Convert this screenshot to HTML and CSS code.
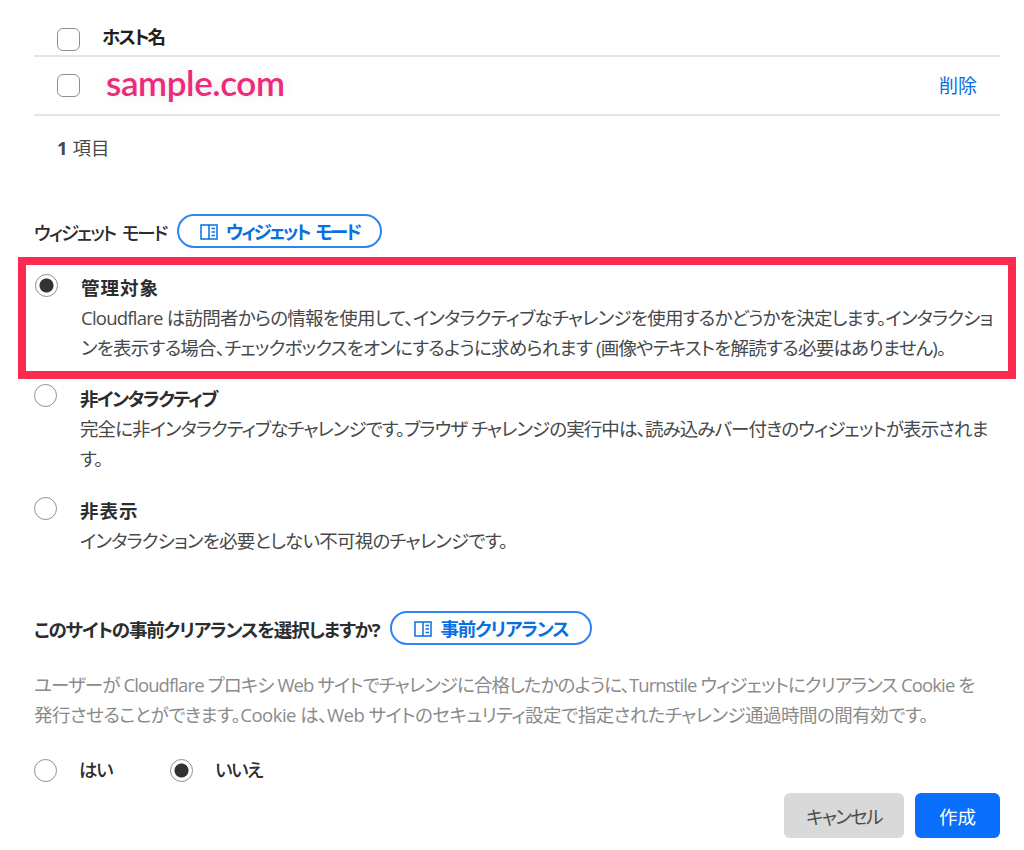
FILE: index.html
```html
<!DOCTYPE html>
<html lang="ja">
<head>
    <meta charset="UTF-8">
    <meta name="viewport" content="width=device-width, initial-scale=1.0">
    <title>ウィジェット モード</title>
    <link rel="stylesheet" href="styles.css">
</head>
<body>

    <!-- Hostname table -->
    <div class="host-table">
        <div class="host-row host-head">
            <span class="checkbox"></span>
            <span class="host-title">ホスト名</span>
        </div>
        <div class="host-row host-item">
            <span class="checkbox"></span>
            <span class="host-name">sample.com</span>
            <a class="delete-link">削除</a>
        </div>
    </div>
    <p class="item-count"><b>1</b> 項目</p>

    <!-- Widget mode -->
    <div class="section-head widget-head">
        <span class="section-label">ウィジェット モード</span>
        <a class="doc-pill widget-pill">
            <svg class="book-icon" viewBox="0 0 18 18"><path d="M1 2h8v14H1zM9 2h8v14H9zM11.500 5.500h3.500M11.500 9h3.500M11.500 12.500h3.500"/></svg>
            ウィジェット モード
        </a>
    </div>

    <div class="highlight">
        <div class="option">
            <span class="radio checked"></span>
            <div class="option-text">
                <div class="option-title kanji">管理対象</div>
                <div class="option-desc">Cloudflare は訪問者からの情報を使用して、インタラクティブなチャレンジを使用するかどうかを決定します。インタラクショ<br>ンを表示する場合、チェックボックスをオンにするように求められます (画像やテキストを解読する必要はありません)。</div>
            </div>
        </div>
    </div>

    <div class="option option-second">
        <span class="radio"></span>
        <div class="option-text">
            <div class="option-title">非インタラクティブ</div>
            <div class="option-desc">完全に非インタラクティブなチャレンジです。ブラウザ チャレンジの実行中は、読み込みバー付きのウィジェットが表示されま<br>す。</div>
        </div>
    </div>

    <div class="option option-third">
        <span class="radio"></span>
        <div class="option-text">
            <div class="option-title kanji">非表示</div>
            <div class="option-desc">インタラクションを必要としない不可視のチャレンジです。</div>
        </div>
    </div>

    <!-- Pre-clearance -->
    <div class="section-head clearance-head">
        <span class="section-label strong">このサイトの事前クリアランスを選択しますか?</span>
        <a class="doc-pill clearance-pill">
            <svg class="book-icon" viewBox="0 0 18 18"><path d="M1 2h8v14H1zM9 2h8v14H9zM11.500 5.500h3.500M11.500 9h3.500M11.500 12.500h3.500"/></svg>
            事前クリアランス
        </a>
    </div>
    <p class="clearance-desc"><span class="tight">ユーザーが Cloudflare プロキシ Web サイトでチャレンジに合格したかのように、Turnstile ウィジェットにクリアランス Cookie を</span><br>発行させることができます。Cookie は、Web サイトのセキュリティ設定で指定されたチャレンジ通過時間の間有効です。</p>

    <div class="yes-no">
        <label class="yes-no-item yes"><span class="radio"></span>はい</label>
        <label class="yes-no-item"><span class="radio checked"></span>いいえ</label>
    </div>

    <div class="actions">
        <button class="btn btn-cancel">キャンセル</button>
        <button class="btn btn-create">作成</button>
    </div>

</body>
</html>
```

FILE: styles.css
```css
/* Reset and Global Styles */
* {
    margin: 0;
    padding: 0;
    box-sizing: border-box;
}

body {
    width: 1024px;
    height: 850px;
    padding: 0 24px 0 34px;
    overflow: hidden;
    background-color: #fff;
    color: #46494a;
    font-family: "Open Sans", "Noto Sans CJK JP", sans-serif;
    font-size: 18.500px;
    line-height: 30px;
    font-feature-settings: "palt";
}

/* Hostname table */
.host-row {
    display: flex;
    align-items: center;
    padding-left: 23px;
    border-bottom: 2px solid #e5e5e5;
}

.host-head {
    height: 57px;
    padding-top: 24px;
}

.host-item {
    height: 59px;
    padding-right: 23px;
}

.checkbox {
    flex: none;
    width: 23px;
    height: 23px;
    border: 1px solid #8f8f8f;
    border-radius: 6px;
    background-color: #fff;
}

.host-head .checkbox {
    margin-top: -1px;
}

.host-title {
    margin: -6px 0 0 22px;
    color: #1d1f20;
    font-weight: 700;
    letter-spacing: -2px;
}

.host-name {
    margin: -6px 0 0 26px;
    padding: 0 0 2px;
    color: #ee2a7b;
    font-family: "Lato", sans-serif;
    font-size: 35px;
    font-weight: 600;
    letter-spacing: -0.4px;
    text-shadow: 0 0 14px #e6e6e6;
}

.delete-link {
    margin-left: auto;
    color: #0a6fe0;
    font-size: 19px;
}

.item-count {
    margin: 17px 0 0 23px;
}

/* Section headings */
.section-head {
    display: flex;
    align-items: center;
    gap: 11px;
    height: 34px;
}

.widget-head {
    margin-top: 51px;
}

.section-label {
    padding-top: 3px;
    color: #2b2d2e;
    font-weight: 500;
    letter-spacing: -2px;
    word-spacing: 4px;
}

.section-label.strong {
    font-weight: 700;
    letter-spacing: -1.15px;
}

.doc-pill {
    display: flex;
    align-items: center;
    justify-content: center;
    gap: 8px;
    height: 34px;
    padding-top: 2px;
    border: 2px solid #2f83f5;
    border-radius: 17px;
    background-color: #fff;
    color: #0a6fe0;
    font-weight: 700;
    letter-spacing: -2.500px;
    word-spacing: 4px;
}

.widget-pill {
    width: 205px;
}

.clearance-pill {
    width: 202px;
    letter-spacing: -1.200px;
}

.book-icon {
    width: 18px;
    height: 18px;
    fill: none;
    stroke: #0a6fe0;
    stroke-width: 1.5;
}

/* Radio options */
.highlight {
    width: 998px;
    height: 122px;
    margin: 9px 0 0 -16px;
    padding: 8px 0 0 9px;
    border: 8px solid #fb2a4f;
}

.highlight .radio {
    margin-top: 1px;
}

.option {
    display: flex;
    gap: 23px;
}

.option-text {
    flex: 1;
    white-space: nowrap;
}

.option-second {
    margin-top: 5px;
}

.option-third {
    margin-top: 22px;
}

.option-third .radio {
    margin-top: 1px;
}

.radio {
    flex: none;
    width: 23px;
    height: 23px;
    border: 1px solid #8f8f8f;
    border-radius: 50%;
    background-color: #fff;
}

.radio.checked {
    background: radial-gradient(circle, #303233 0 6.500px, #fff 7.500px);
}

.option-title {
    color: #2b2d2e;
    font-weight: 700;
    letter-spacing: -1.500px;
}

.option-title.kanji {
    letter-spacing: 1px;
}

.option-desc {
    letter-spacing: -0.75px;
}

.option-second .option-desc {
    letter-spacing: -0.9px;
}

/* Pre-clearance */
.clearance-head {
    margin-top: 55px;
}

.clearance-desc {
    margin-top: 25px;
    color: #8b8b8b;
    letter-spacing: -0.5px;
    white-space: nowrap;
}

.clearance-desc .tight {
    letter-spacing: -0.9px;
}

.yes-no {
    display: flex;
    margin-top: 25px;
}

.yes-no-item {
    display: flex;
    align-items: center;
    gap: 22px;
    color: #2b2d2e;
    font-weight: 500;
    letter-spacing: -1.500px;
}

.yes {
    width: 136px;
}

/* Buttons */
.actions {
    display: flex;
    justify-content: flex-end;
    gap: 11px;
    margin-top: 8px;
}

.btn {
    height: 45px;
    border: none;
    border-radius: 6px;
    font-family: inherit;
    font-size: 18.500px;
    font-feature-settings: "palt";
}

.btn-cancel {
    width: 120px;
    background-color: #d9d9d9;
    color: #4d4d4d;
    letter-spacing: -1.600px;
}

.btn-create {
    width: 85px;
    background-color: #0a6ffd;
    color: #fff;
}
```
